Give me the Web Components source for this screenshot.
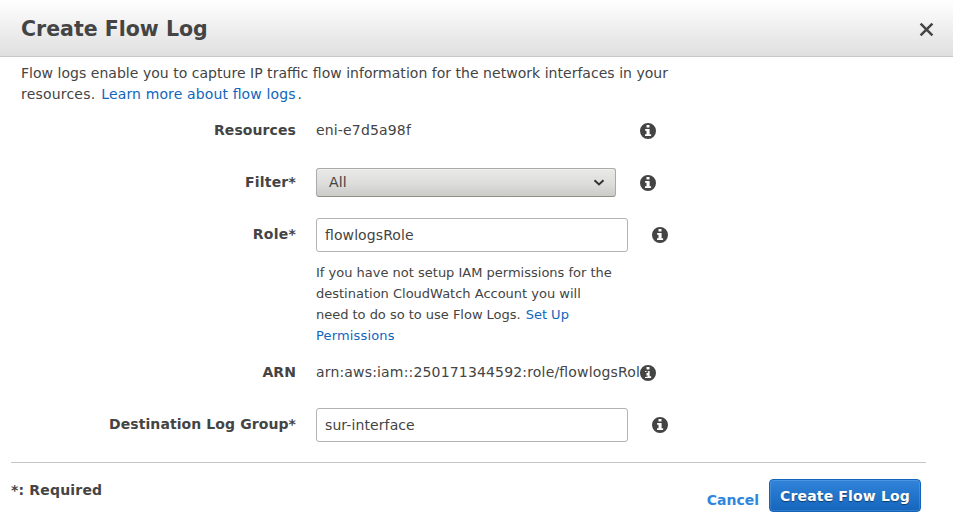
<!DOCTYPE html>
<html lang="en">
<head>
<meta charset="utf-8">
<title>Create Flow Log</title>
<style>
html,body{margin:0;height:100%;overflow:hidden;background:#fff}
body{font:14px/21px "DejaVu Sans",sans-serif;color:#444;font-feature-settings:"liga" 1}
</style>
</head>
<body>
<flow-dialog>
  <dialog-header slot="header">Create Flow Log</dialog-header>
  <intro-text slot="body">
    <text-line style="letter-spacing:.028px">Flow logs enable you to capture IP traffic flow information for the network interfaces in your</text-line>
    <text-line><span style="letter-spacing:.2px">resources.</span><text-link style="margin:0 2px 0 6px;letter-spacing:.13px">Learn more about flow logs</text-link><span>.</span></text-line>
  </intro-text>
  <form-row slot="body" label="Resources"><span style="letter-spacing:.16px">eni-e7d5a98f</span></form-row>
  <form-row slot="body" label="Filter*" style="--label-spacing:.2px"><select-box>All</select-box></form-row>
  <form-row slot="body" label="Role*" wide style="--label-spacing:.25px"><text-field>flowlogsRole</text-field><field-note slot="note">
    <text-line>If you have not setup IAM permissions for the</text-line>
    <text-line>destination CloudWatch Account you will</text-line>
    <text-line><span style="letter-spacing:-.02px">need to do so to use Flow Logs.</span><text-link style="margin-left:5px">Set Up</text-link></text-line>
    <text-line><text-link style="letter-spacing:.16px">Permissions</text-link></text-line>
  </field-note></form-row>
  <form-row slot="body" label="ARN"><span style="letter-spacing:.168px">arn:aws:iam::250171344592:role/flowlogsRole</span></form-row>
  <form-row slot="body" label="Destination Log Group*" wide><text-field>sur-interface</text-field></form-row>
  <dialog-footer slot="footer">*: Required
    <text-link slot="actions" strong>Cancel</text-link>
    <primary-button slot="actions">Create Flow Log</primary-button>
  </dialog-footer>
</flow-dialog>
<script>
const define = (name, markup) => customElements.define(name, class extends HTMLElement {
  constructor() {
    super();
    this.attachShadow({mode: 'open'}).innerHTML = markup;
  }
  connectedCallback() {
    const label = this.shadowRoot.querySelector('.label');
    if (label) label.textContent = this.getAttribute('label');
  }
});

define('text-link', `<style>
:host{display:inline;color:#1166bb;cursor:pointer}
:host([strong]){color:#2e86de;font-weight:bold}
</style><slot></slot>`);

define('text-line', `<style>
:host{display:flex;white-space:nowrap}
</style><slot></slot>`);

define('info-icon', `<style>
:host{display:block;width:16px;height:16px}
svg{display:block}
</style><svg width="16" height="16" viewBox="0 0 16 16"><path fill="#444" fill-rule="evenodd" d="M8 0a8 8 0 1 0 0 16A8 8 0 0 0 8 0ZM6.5 2H9.5V4.5H6.5ZM5.1 5.9H9.6V11.2H11.1V13.1H5V11.2H6.5V7.8H5.1Z"/></svg>`);

define('dialog-header', `<style>
:host{display:flex;align-items:center;justify-content:space-between;box-sizing:border-box;height:57px;padding:0 19px 0 21px;border-bottom:1px solid #c8c8c8;background:linear-gradient(#fff,#dfdfdf)}
h1{margin:1px 0 0;font-size:20.5px;line-height:28px;font-weight:bold}
svg{display:block;margin-top:2px}
</style><h1><slot></slot></h1><svg width="15" height="15" viewBox="0 0 15 15"><path d="M1.6 1.6 13.4 13.4M13.4 1.6 1.6 13.4" stroke="#444" stroke-width="2.5" fill="none"/></svg>`);

define('intro-text', `<style>
:host{display:block;width:660px;padding:6px 0 8px 21px}
</style><slot></slot>`);

define('form-row', `<style>
:host{display:grid;grid-template-columns:296px 300px 16px;column-gap:20px;padding-bottom:18px}
:host([wide]){grid-template-columns:296px 312px 16px}
.label{font-weight:bold;text-align:right;line-height:34px;letter-spacing:var(--label-spacing,.09px)}
.field{display:flex;align-items:center;height:34px;white-space:nowrap}
info-icon{position:relative;margin:10px 0 0 4px}
.note{grid-column:2}
</style><div class="label"></div><div class="field"><slot></slot></div><info-icon></info-icon><div class="note"><slot name="note"></slot></div>`);

define('select-box', `<style>
:host{display:flex;align-items:center;justify-content:space-between;box-sizing:border-box;width:300px;height:29px;margin-top:1px;padding:0 10px 0 12px;border:1px solid #aaa;border-bottom-color:#919189;border-radius:3px;background:linear-gradient(#e9e9e8,#dededc 50%,#cbcbc8);box-shadow:inset 0 1px #f1f1f0;letter-spacing:.2px}
svg{display:block}
</style><slot></slot><svg width="12" height="8" viewBox="0 0 12 8"><path d="M1.5 1.2 6 5.4 10.5 1.2" fill="none" stroke="#333" stroke-width="2"/></svg>`);

define('text-field', `<style>
:host{display:block;box-sizing:border-box;width:312px;height:34px;flex:none;margin-top:2px;padding:0 8px;border:1px solid #b2b2b2;border-radius:3px;background:#fff;line-height:32px;letter-spacing:.1px}
</style><slot></slot>`);

define('field-note', `<style>
:host{display:block;width:300px;padding:11px 0 0;margin-bottom:-9px;font-size:13px;line-height:21px}
</style><slot></slot>`);

define('primary-button', `<style>
:host{display:block;box-sizing:border-box;width:152px;height:33px;border:1px solid #1166bb;border-radius:4px;background:linear-gradient(#3184da,#1565bd);box-shadow:inset 0 0 0 1px rgba(255,255,255,.13);color:#fff;font-weight:bold;line-height:33px;text-align:center;letter-spacing:.16px;text-shadow:0 1px 1px rgba(0,0,0,.45);cursor:pointer}
</style><slot></slot>`);

define('dialog-footer', `<style>
:host{display:flex;justify-content:space-between;box-sizing:border-box;width:915px;margin-left:11px;padding:16px 5px 0 0;border-top:1px solid #c6c6c6;font-weight:bold}
.req{padding-top:1px;letter-spacing:.18px}
.actions{display:flex;gap:10px;line-height:42px}
</style><div class="req"><slot></slot></div><div class="actions"><slot name="actions"></slot></div>`);

define('flow-dialog', `<style>
:host{display:block;height:526px;overflow:hidden;background:#fff}
main{height:405px}
</style><slot name="header"></slot><main><slot name="body"></slot></main><slot name="footer"></slot>`);
</script>
</body>
</html>
